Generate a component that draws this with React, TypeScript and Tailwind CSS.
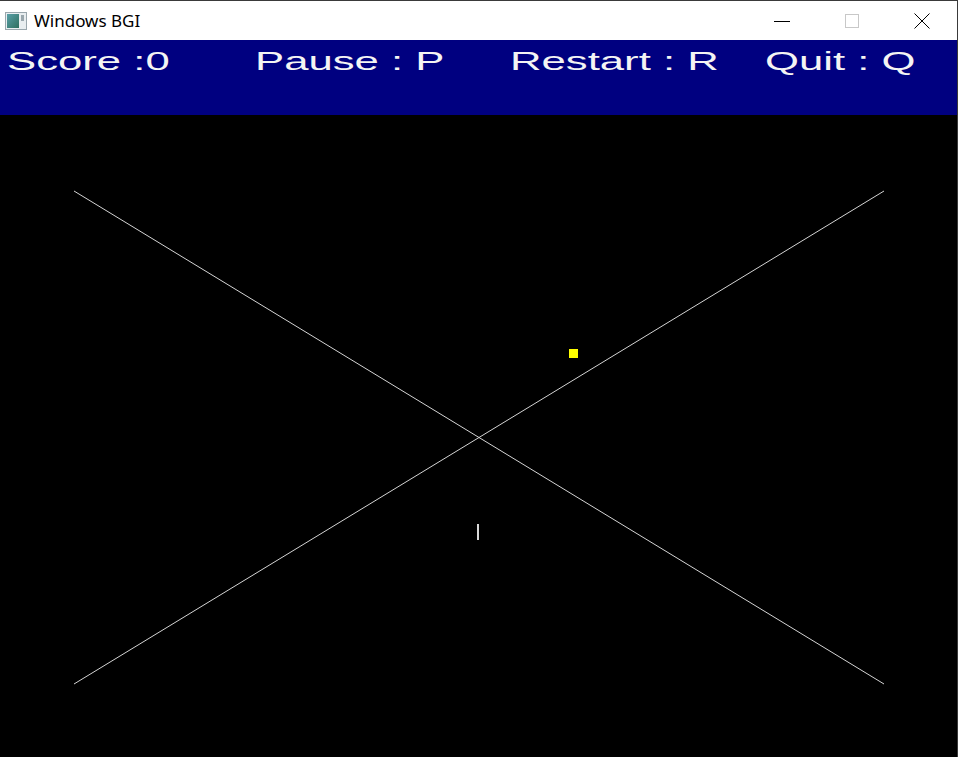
const hud = [
  { label: 'Score :0', width: 'w-[248px]' },
  { label: 'Pause : P', width: 'w-[255px]' },
  { label: 'Restart : R', width: 'w-[255px]' },
  { label: 'Quit : Q', width: 'w-[192px]' },
];

const AppIcon = () => (
  <svg width="22" height="18" viewBox="0 0 22 18" className="shrink-0">
    <defs>
      <linearGradient id="ico" x1="0" y1="0" x2="1" y2="1">
        <stop offset="0" stopColor="#5aa0a8" />
        <stop offset="1" stopColor="#2e6f5e" />
      </linearGradient>
    </defs>
    <rect x="0.5" y="0.5" width="21" height="17" fill="#e9eef0" stroke="#9aa7ad" />
    <rect x="2" y="2" width="12" height="14" fill="url(#ico)" />
    <rect x="16" y="3" width="3" height="6" fill="#9aa7ad" />
  </svg>
);

const TitleBar = () => (
  <div className="flex h-[39px] items-center bg-white">
    <div className="flex items-center gap-[7px] pl-[5px]">
      <AppIcon />
      <span className="text-[17px] leading-none text-black" style={{ fontFamily: '"Noto Sans", sans-serif' }}>
        Windows BGI
      </span>
    </div>
    <div className="ml-auto flex h-full items-center">
      {/* minimize */}
      <div className="flex h-full w-[70px] items-center justify-center">
        <svg width="16" height="16" viewBox="0 0 16 16">
          <line x1="0" y1="8.5" x2="16" y2="8.5" stroke="#000" strokeWidth="1" />
        </svg>
      </div>
      {/* maximize (disabled) */}
      <div className="flex h-full w-[70px] items-center justify-center">
        <svg width="16" height="16" viewBox="0 0 16 16">
          <rect x="1.5" y="1.5" width="13" height="13" fill="none" stroke="#c8c8c8" strokeWidth="1" />
        </svg>
      </div>
      {/* close */}
      <div className="flex h-full w-[70px] items-center justify-center">
        <svg width="16" height="16" viewBox="0 0 16 16">
          <path d="M0.5 0.5 L15.5 15.5 M15.5 0.5 L0.5 15.5" stroke="#000" strokeWidth="1" />
        </svg>
      </div>
    </div>
  </div>
);

const Hud = () => (
  <div className="flex h-[75px] items-start bg-[#000080] pl-[7px] pt-[6px]">
    {hud.map((item) => (
      <div key={item.label} className={`${item.width} shrink-0`}>
        <span
          className="inline-block origin-left scale-x-[1.68] whitespace-nowrap text-[26px] leading-[30px] text-[#f4f4f4]"
          style={{ fontFamily: '"Liberation Sans", Arial, sans-serif' }}
        >
          {item.label}
        </span>
      </div>
    ))}
  </div>
);

const Playfield = () => (
  <div className="flex-1 bg-black">
    <svg width="957" height="642" viewBox="0 0 957 642" className="block">
      <line x1="74" y1="76" x2="884" y2="569" stroke="#d4d4d4" strokeWidth="1" />
      <line x1="884" y1="76" x2="74" y2="569" stroke="#d4d4d4" strokeWidth="1" />
      <rect x="569" y="234" width="9" height="9" fill="#ffff00" />
      <rect x="477" y="409" width="2" height="16" fill="#d8d8d8" />
    </svg>
  </div>
);

export default function App() {
  return (
    <div className="flex h-[757px] w-[958px] flex-col overflow-hidden border-r border-t border-[#3a3a3a] bg-black">
      <TitleBar />
      <Hud />
      <Playfield />
    </div>
  );
}
